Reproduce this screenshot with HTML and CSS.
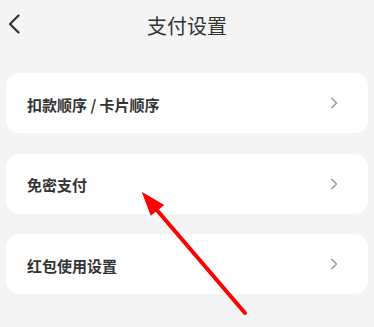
FILE: index.html
```html
<!DOCTYPE html>
<html lang="zh-CN">
<head>
<meta charset="utf-8">
<title>支付设置</title>
<link rel="stylesheet" href="styles.css">
</head>
<body>
<div class="page">
  <header class="topbar">
    <svg class="back" width="12" height="20" viewBox="0 0 12 20"><polyline points="10.5,1.5 2,10 10.5,18.5" fill="none" stroke="#333" stroke-width="2.2" stroke-linecap="round" stroke-linejoin="round"/></svg>
    <h1 class="title">支付设置</h1>
  </header>
  <main class="list">
    <div class="card"><span class="label">扣款顺序 / 卡片顺序</span><svg class="chev" width="8" height="12" viewBox="0 0 8 12"><polyline points="1.5,1 6.5,6 1.5,11" fill="none" stroke="#9a9a9a" stroke-width="1.5"/></svg></div>
    <div class="card"><span class="label">免密支付</span><svg class="chev" width="8" height="12" viewBox="0 0 8 12"><polyline points="1.5,1 6.5,6 1.5,11" fill="none" stroke="#9a9a9a" stroke-width="1.5"/></svg></div>
    <div class="card"><span class="label">红包使用设置</span><svg class="chev" width="8" height="12" viewBox="0 0 8 12"><polyline points="1.5,1 6.5,6 1.5,11" fill="none" stroke="#9a9a9a" stroke-width="1.5"/></svg></div>
  </main>
  <svg class="annot" width="374" height="327" viewBox="0 0 374 327">
    <line x1="245" y1="313" x2="156" y2="209" stroke="#ff0000" stroke-width="4" stroke-linecap="round"/>
    <polygon points="141.7,191.7 150.7,215.7 164.3,205" fill="#ff0000"/>
  </svg>
</div>
</body>
</html>
```
FILE: styles.css
```css
html, body {
  margin: 0;
  padding: 0;
  background: #f4f4f4;
}
body {
  font-family: "Noto Sans CJK SC", "Noto Sans", sans-serif;
  color: #333;
}
.page {
  position: relative;
  width: 374px;
  height: 327px;
  overflow: hidden;
}
.topbar {
  position: relative;
  height: 52px;
  display: flex;
  align-items: center;
  justify-content: center;
}
.back {
  position: absolute;
  left: 8px;
  top: 14px;
}
.title {
  margin: 0;
  font-size: 20px;
  font-weight: 400;
  color: #333;
  line-height: 1;
}
.list {
  display: flex;
  flex-direction: column;
  gap: 20.5px;
  padding: 21px 6px 0 6px;
}
.card {
  height: 60px;
  background: #fff;
  border-radius: 13px;
  display: flex;
  align-items: center;
  justify-content: space-between;
  padding: 0 30px 0 21px;
}
.label {
  font-size: 15px;
  font-weight: 700;
  color: #333;
  margin-top: 2px;
}
.chev {
  display: block;
}
.annot {
  position: absolute;
  left: 0;
  top: 0;
  pointer-events: none;
}
```
